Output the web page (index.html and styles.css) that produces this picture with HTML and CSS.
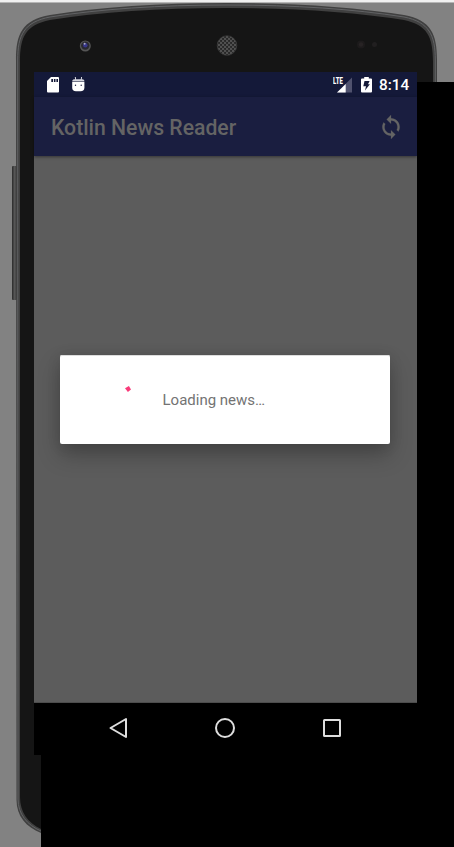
FILE: index.html
```
<!DOCTYPE html>
<html lang="en">
<head>
<meta charset="utf-8">
<title>Kotlin News Reader</title>
<link rel="stylesheet" href="styles.css">
</head>
<body>
<svg class="device" viewBox="0 0 454 847" aria-hidden="true">
  <defs>
    <pattern id="mesh" width="4" height="4" patternUnits="userSpaceOnUse">
      <rect width="4" height="4" fill="#505050"/>
      <rect x=".2" y=".2" width="1.700" height="1.500" fill="#151515"/>
      <rect x="2.200" y="2.200" width="1.700" height="1.500" fill="#151515"/>
    </pattern>
    <linearGradient id="key"><stop offset="0" stop-color="#292929"/><stop offset=".5" stop-color="#565656"/><stop offset="1" stop-color="#3a3a3a"/></linearGradient>
  </defs>
  <rect width="454" height="847" fill="#828282"/>
  <rect width="454" height="2" fill="#f0f0f0"/>
  <rect y="2" width="454" height="1" fill="#b5b5b5"/>
  <rect x="12" y="166" width="5" height="134" rx="1" fill="url(#key)"/>
  <path d="M16 60C16 34 22 20 50 15Q125 3 227 3Q329 3 404 15C431 20 437 34 437 60V100H60V833H41C26 827 16.500 816 16.500 800Z" fill="#404040"/>
  <path d="M17.700 60C17.700 35 24 22 50 17Q125 5 227 5Q329 5 404 17C429 22 435.300 35 435.300 60V100H60V831H41C27 825 18 814 18 799Z" fill="#404040" stroke="#626365" stroke-width="1"/>
  <path d="M20 62C20 36 26 25 50 20Q125 8 227 8Q329 8 404 20C427 25 433 36 433 62V100H60V829H41C28 823 20 812 20 797Z" fill="#151515"/>
  <circle cx="85.300" cy="46" r="5.500" fill="#555"/>
  <circle cx="85.300" cy="45.600" r="4.200" fill="#292930"/>
  <circle cx="85.300" cy="45.300" r="2.200" fill="#36358a"/>
  <circle cx="84.600" cy="43.800" r="1" fill="#aaa9c4"/>
  <circle cx="227" cy="45.500" r="9.800" fill="url(#mesh)" stroke="#3c3c3c" stroke-width=".7"/>
  <circle cx="361" cy="44.500" r="4" fill="#1d1b1c"/>
  <circle cx="361" cy="44.500" r="2.200" fill="#272324"/>
  <circle cx="374.500" cy="44.500" r="2.500" fill="#211f20"/>
  <path d="M417 82H454V847H41V755H34V700H417Z" fill="#000"/>
</svg>
<main class="screen">
  <header class="status">
    <svg class="status-left" viewBox="0 0 40 16" aria-hidden="true">
      <path d="M4 0H11Q12 0 12 1V14.500Q12 15.500 11 15.500H1Q0 15.500 0 14.500V4Z" fill="#fff"/>
      <path d="M4.300 2H6V5H4.300ZM6.900 2H8.500V5H6.900ZM9.400 2H11V5H9.400Z" fill="#141939"/>
      <path d="M25.300 4.200V3.400Q26 2.300 27.500 2.300H35Q36.700 2.300 37.300 3.400V4.200Z" fill="#d6d7df"/>
      <path d="M25.200 4.700H37.400V10.500Q37.400 14.300 33.500 14.300H29Q25.200 14.300 25.200 10.500Z" fill="#fff"/>
      <path d="M28.300 0L28.700 3M34.600 0L34.200 3" stroke="#d6d7df" stroke-width="1"/>
      <circle cx="28.500" cy="8.200" r=".7" fill="#141939"/><circle cx="34.200" cy="8.200" r=".7" fill="#141939"/>
    </svg>
    <div class="signal">
      <svg viewBox="0 0 19 16" aria-hidden="true">
        <path d="M19 .5V15.500H4Z" fill="#50526e"/>
        <path d="M12.700 7V15.500H4Z" fill="#fff"/>
      </svg>
      <span>LTE</span>
    </div>
    <svg class="battery" viewBox="0 0 11 16" aria-hidden="true">
      <path d="M3.200 0H7.800V1.500H10Q11 1.500 11 2.500V14.500Q11 15.500 10 15.500H1Q0 15.500 0 14.500V2.500Q0 1.500 1 1.500H3.200Z" fill="#fff"/>
      <path d="M3.500 4H8.600L7 7.300H8.900L4 13.500L5 9.300H2.300Z" fill="#141939"/>
    </svg>
    <time>8:14</time>
  </header>
  <div class="toolbar">
    <h1>Kotlin News Reader</h1>
    <svg class="sync" viewBox="0 0 24 24" aria-hidden="true"><path d="M12 4V1L8 5l4 4V6c3.310 0 6 2.690 6 6 0 1.010-.25 1.970-.7 2.800l1.460 1.460C19.540 15.030 20 13.570 20 12c0-4.420-3.580-8-8-8zm0 14c-3.310 0-6-2.690-6-6 0-1.010.25-1.970.7-2.800L5.240 7.740C4.460 8.970 4 10.430 4 12c0 4.420 3.580 8 8 8v3l4-4-4-4v3z"/></svg>
  </div>
  <section class="content">
    <div class="dialog" role="dialog">
      <svg class="spinner" viewBox="0 0 6 6" aria-hidden="true"><path d="M0 2.200L3.900 0L6 3.500L2.900 6Z" fill="#f93a79"/></svg>
      <p>Loading news…</p>
    </div>
  </section>
  <nav class="navbar">
    <svg viewBox="0 0 22 22" aria-hidden="true"><path d="M18 2V20L2.500 11Z"/></svg>
    <svg viewBox="0 0 22 22" aria-hidden="true"><circle cx="11" cy="11" r="9"/></svg>
    <svg viewBox="0 0 22 22" aria-hidden="true"><rect x="3" y="3" width="16" height="16" rx=".5"/></svg>
  </nav>
</main>
</body>
</html>
```
FILE: styles.css
```
* { box-sizing: border-box; }
body {
  margin: 0;
  width: 454px;
  height: 847px;
  overflow: hidden;
  padding: 72px 37px 0 34px;
  background: #828282;
  font-family: Roboto, "Liberation Sans", sans-serif;
}
svg { display: block; flex: none; }
.device { position: absolute; top: 0; left: 0; width: 454px; height: 847px; z-index: -1; }
.screen { display: flex; flex-direction: column; width: 383px; height: 683px; }
.status {
  display: flex;
  flex: none;
  align-items: flex-start;
  height: 25px;
  padding: 5px 8px 0 13px;
  background: #141939;
  color: #fff;
}
.status-left { width: 40px; height: 16px; margin-right: auto; }
.signal { position: relative; width: 19px; margin-right: 9px; }
.signal svg { width: 19px; height: 16px; }
.signal span {
  position: absolute;
  top: -1px;
  left: 0;
  font-size: 9.500px;
  line-height: 10px;
  font-weight: 900;
  transform: scaleX(.63);
  transform-origin: left;
}
.battery { width: 11px; height: 16px; margin-right: 7px; }
time { width: 30px; font-size: 15.300px; line-height: 17px; font-weight: 500; white-space: nowrap; }
.toolbar {
  display: flex;
  flex: none;
  align-items: center;
  justify-content: space-between;
  height: 59px;
  padding: 3px 13px 0 17px;
  background: #1a1e40;
  box-shadow: 0 1px 3px rgba(0, 0, 0, .45);
  z-index: 1;
}
h1 { margin: 0; font-size: 21.200px; line-height: 26px; font-weight: 500; color: #646464; white-space: nowrap; }
.sync { width: 26px; height: 26px; margin-top: -3px; fill: #646464; stroke: #646464; stroke-width: .2; }
.content {
  display: flex;
  align-items: flex-start;
  height: 547px;
  flex: none;
  padding: 199px 0 0 26px;
  background: #5c5c5c;
  border-bottom: 1px solid #4c4c4c;
  overflow: hidden;
}
.dialog {
  display: flex;
  align-items: flex-start;
  width: 330px;
  height: 89px;
  padding: 31px 0 0 65px;
  border-radius: 2px;
  background: #fff;
  box-shadow: 0 11px 22px rgba(0, 0, 0, .25), 0 2px 14px rgba(0, 0, 0, .1), inset 0 1px #ddd;
}
.spinner { width: 6px; height: 6px; margin-right: 31.500px; }
.dialog p { margin: 4px 0 0; font-size: 15px; line-height: 20px; color: #737373; white-space: nowrap; }
.navbar {
  display: flex;
  flex: none;
  justify-content: space-between;
  height: 52px;
  padding: 14px 74.500px 0 74px;
  background: #000;
}
.navbar svg { width: 22px; height: 22px; fill: none; stroke: #dedede; stroke-width: 2; stroke-linejoin: round; }
```
